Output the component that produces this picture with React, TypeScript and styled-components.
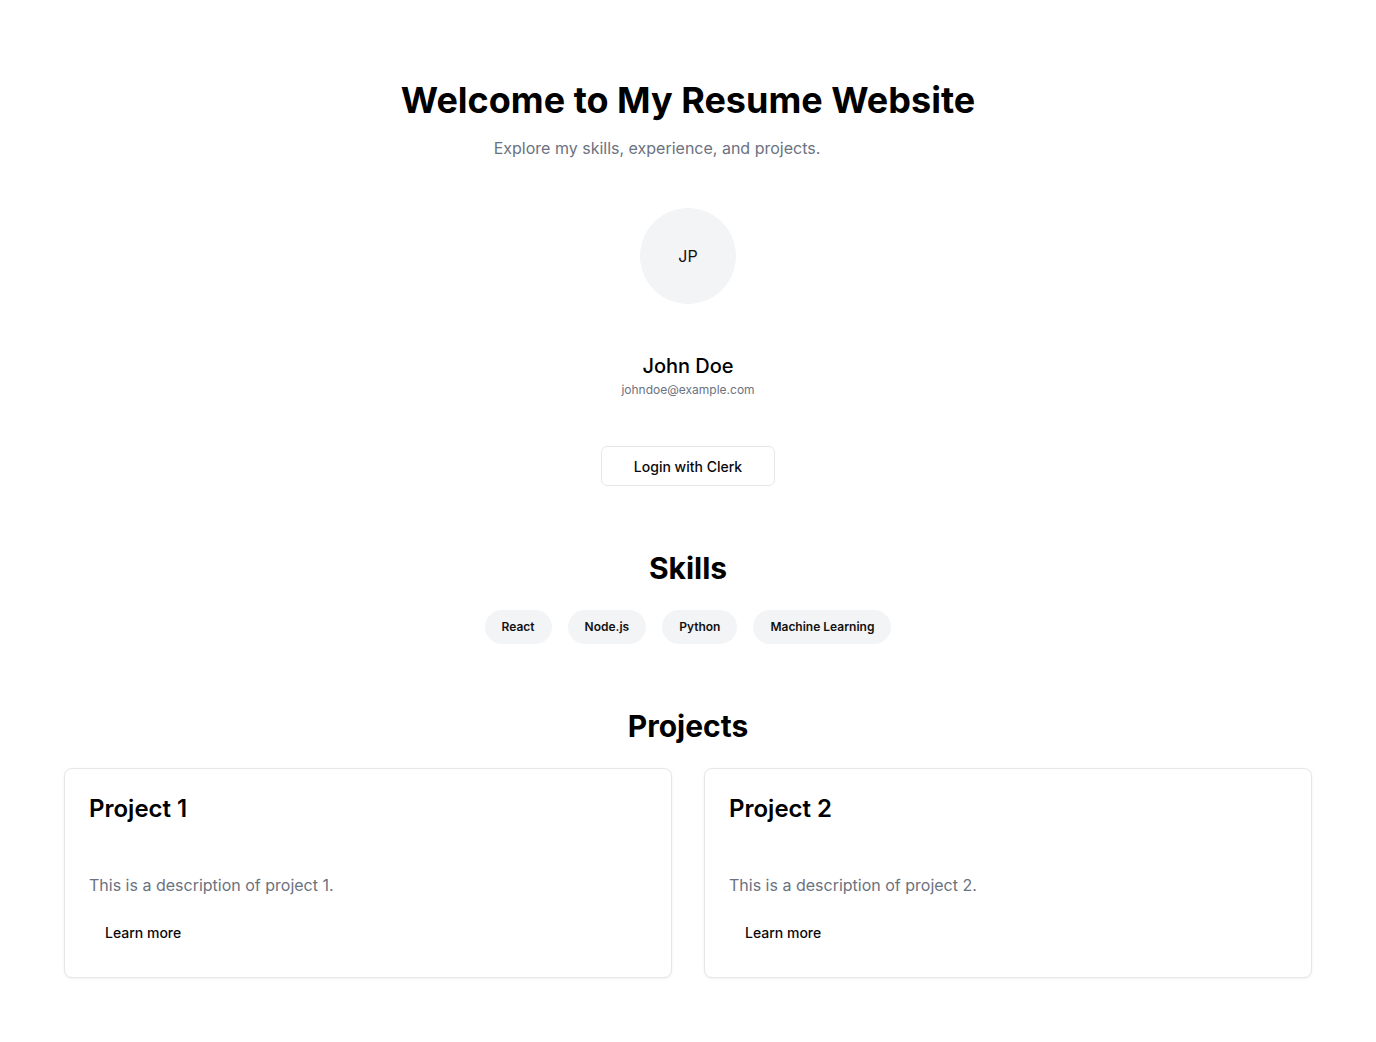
import styled, { createGlobalStyle } from "styled-components"

const GlobalStyle = createGlobalStyle`
  * {
    box-sizing: border-box;
  }
  body {
    margin: 0;
    background: #ffffff;
    color: #09090b;
    font-family: Inter, "Noto Sans", sans-serif;
  }
`

const Page = styled.main`
  display: flex;
  flex-direction: column;
  align-items: center;
  padding: 80px 64px 64px;
`

const Hero = styled.header`
  display: flex;
  flex-direction: column;
  align-items: center;
  gap: 16px;
`

const Title = styled.h1`
  margin: 0;
  font-size: 36px;
  line-height: 40px;
  font-weight: 700;
  color: #000;
`

const Subtitle = styled.p`
  margin: 0 62px 0 0;
  font-size: 16px;
  line-height: 24px;
  color: #6b7280;
`

const Avatar = styled.div`
  display: flex;
  align-items: center;
  justify-content: center;
  width: 96px;
  height: 96px;
  margin-top: 48px;
  border-radius: 50%;
  background: #f3f4f6;
  font-size: 16px;
  color: #111;
`

const Profile = styled.div`
  display: flex;
  flex-direction: column;
  align-items: center;
  gap: 2px;
  margin-top: 48px;
`

const Name = styled.h2`
  margin: 0;
  font-size: 20px;
  line-height: 28px;
  font-weight: 500;
  color: #000;
`

const Email = styled.span`
  font-size: 12px;
  line-height: 16px;
  color: #6b7280;
`

const Button = styled.button<{ $ghost?: boolean }>`
  display: inline-flex;
  align-items: center;
  height: 40px;
  padding: 0 ${({ $ghost }) => ($ghost ? "15px" : "32px")};
  border: 1px solid ${({ $ghost }) => ($ghost ? "transparent" : "#e5e7eb")};
  border-radius: 6px;
  background: #fff;
  font-family: inherit;
  font-size: 14px;
  font-weight: 500;
  color: #09090b;
  cursor: pointer;
`

const LoginButton = styled(Button)`
  margin-top: 48px;
`

const Section = styled.section`
  display: flex;
  flex-direction: column;
  align-items: center;
  gap: 24px;
  width: 100%;
  margin-top: 64px;
`

const SectionTitle = styled.h2`
  margin: 0;
  font-size: 30px;
  line-height: 36px;
  font-weight: 700;
  color: #000;
`

const Badges = styled.div`
  display: flex;
  gap: 16px;
`

const Badge = styled.span`
  padding: 8px 17px;
  border-radius: 999px;
  background: #f3f4f6;
  font-size: 12px;
  line-height: 18px;
  font-weight: 600;
  color: #111;
`

const Grid = styled.div`
  display: grid;
  grid-template-columns: 1fr 1fr;
  gap: 32px;
  width: 100%;
`

const Card = styled.article`
  display: flex;
  flex-direction: column;
  align-items: flex-start;
  padding: 24px 24px 25px;
  border: 1px solid #e5e7eb;
  border-radius: 8px;
  background: #fff;
  box-shadow: 0 1px 3px rgba(0, 0, 0, 0.06);
`

const CardTitle = styled.h3`
  margin: 0 0 48px;
  font-size: 24px;
  line-height: 32px;
  font-weight: 600;
  color: #000;
`

const CardText = styled.p`
  margin: 0 0 15px;
  font-size: 16px;
  line-height: 24px;
  color: #6b7280;
`

const skills = ["React", "Node.js", "Python", "Machine Learning"]
const projects = [1, 2]

export default function App() {
  return <>
    <GlobalStyle />
    <Page>
      <Hero>
        <Title>Welcome to My Resume Website</Title>
        <Subtitle>Explore my skills, experience, and projects.</Subtitle>
      </Hero>
      <Avatar>JP</Avatar>
      <Profile>
        <Name>John Doe</Name>
        <Email>johndoe@example.com</Email>
      </Profile>
      <LoginButton>Login with Clerk</LoginButton>
      <Section>
        <SectionTitle>Skills</SectionTitle>
        <Badges>
          {skills.map(s => <Badge key={s}>{s}</Badge>)}
        </Badges>
      </Section>
      <Section>
        <SectionTitle>Projects</SectionTitle>
        <Grid>
          {projects.map(n => (
            <Card key={n}>
              <CardTitle>Project {n}</CardTitle>
              <CardText>This is a description of project {n}.</CardText>
              <Button $ghost>Learn more</Button>
            </Card>
          ))}
        </Grid>
      </Section>
    </Page>
  </>
}
